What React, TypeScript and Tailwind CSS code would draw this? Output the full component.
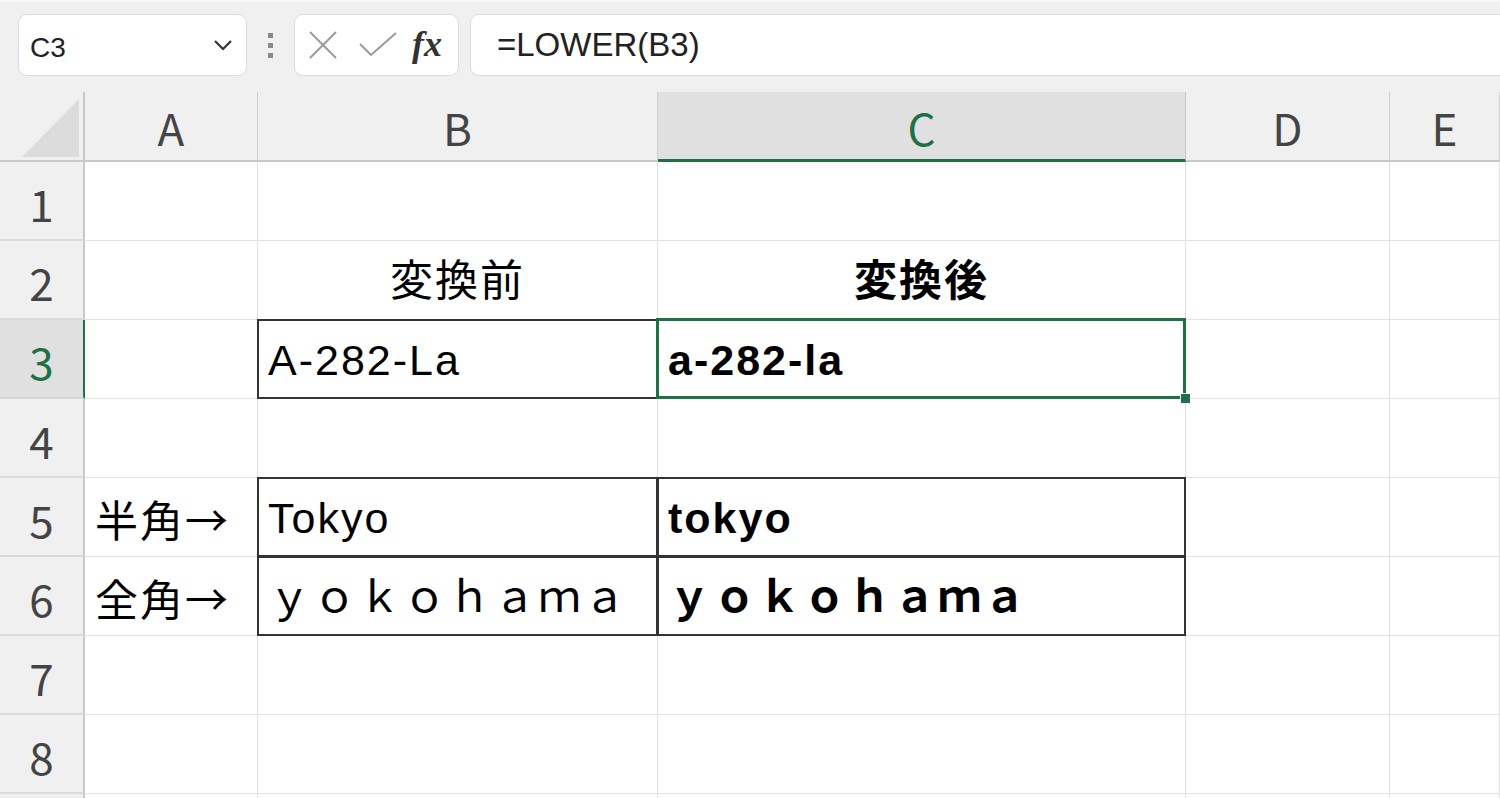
import React from "react";

const cellFont = { fontFamily: '"Liberation Sans", "Noto Sans CJK JP", sans-serif' };

type Cell = {
  text?: string;
  bold?: boolean;
  center?: boolean;
  cjk?: boolean;
  box?: boolean;
  selected?: boolean;
};

const rows: Cell[][] = [
  [{}, {}, {}, {}, {}],
  [{}, { text: "変換前", center: true }, { text: "変換後", center: true, bold: true }, {}, {}],
  [{}, { text: "A-282-La", box: true }, { text: "a-282-la", bold: true, selected: true }, {}, {}],
  [{}, {}, {}, {}, {}],
  [{ text: "半角→", cjk: true }, { text: "Tokyo", box: true }, { text: "tokyo", bold: true, box: true }, {}, {}],
  [{ text: "全角→", cjk: true }, { text: "ｙｏｋｏｈａｍａ", box: true }, { text: "ｙｏｋｏｈａｍａ", bold: true, box: true }, {}, {}],
  [{}, {}, {}, {}, {}],
  [{}, {}, {}, {}, {}],
  [{}, {}, {}, {}, {}],
];

const cols = ["A", "B", "C", "D", "E"];

export default function App() {
  return (
    <div className="w-[1500px] h-[798px] overflow-hidden bg-[#f0f0f0]" style={cellFont}>
      {/* Formula bar */}
      <div className="h-[92px] flex items-start pt-[12px] pl-[18px] border-t-2 border-[#f8f8f8]">
        <div className="w-[229px] h-[62px] bg-white rounded-[9px] border border-[#dcdcdc] flex items-center justify-between pl-[11px] pr-[13px] shrink-0">
          <span className="text-[28px] text-[#222] mt-[6px]" style={{ fontFamily: '"Liberation Sans", sans-serif' }}>C3</span>
          <svg width="20" height="12" viewBox="0 0 20 12">
            <polyline points="2,2 10,10 18,2" fill="none" stroke="#333" strokeWidth="2.2" />
          </svg>
        </div>
        <div className="w-[47px] h-[62px] flex flex-col items-center justify-center gap-[5px] shrink-0">
          <span className="w-[5px] h-[5px] bg-[#8a8a8a]" />
          <span className="w-[5px] h-[5px] bg-[#8a8a8a]" />
          <span className="w-[5px] h-[5px] bg-[#8a8a8a]" />
        </div>
        <div className="w-[165px] h-[62px] bg-white rounded-[9px] border border-[#dcdcdc] flex items-center pl-[13px] shrink-0">
          <svg width="30" height="30" viewBox="0 0 30 30">
            <line x1="2" y1="2" x2="28" y2="28" stroke="#9a9a9a" strokeWidth="2" />
            <line x1="28" y1="2" x2="2" y2="28" stroke="#9a9a9a" strokeWidth="2" />
          </svg>
          <svg width="40" height="30" viewBox="0 0 40 30" className="ml-[20px]">
            <polyline points="2,14 13,25 38,3" fill="none" stroke="#9a9a9a" strokeWidth="2" />
          </svg>
          <span
            className="ml-[14px] text-[36px] italic font-bold text-[#333] leading-none -mt-[2px]"
            style={{ fontFamily: '"Liberation Serif", serif' }}
          >
            fx
          </span>
        </div>
        <div className="ml-[11px] w-[1100px] h-[62px] bg-white rounded-[9px] border border-[#dcdcdc] flex items-center pl-[26px] shrink-0">
          <span className="text-[33px] text-[#222]" style={{ fontFamily: '"Liberation Sans", sans-serif' }}>=LOWER(B3)</span>
        </div>
      </div>

      {/* Sheet */}
      <div className="grid grid-cols-[85px_173px_400px_528px_204px_1fr] grid-rows-[70px_repeat(9,79px)]">
        {/* corner */}
        <div className="bg-[#f0f0f0] border-r-2 border-b-2 border-[#c8c8c8] relative">
          <svg width="85" height="70" viewBox="0 0 85 70" className="absolute left-0 top-0">
            <polygon points="22,65 79,65 79,7" fill="#dcdcdc" />
          </svg>
        </div>
        {cols.map((c) => {
          const sel = c === "C";
          return (
            <div
              key={c}
              className={
                sel
                  ? "bg-[#e0e0e0] border-r border-[#c8c8c8] border-b-[3px] border-b-[#1e7145] flex items-center justify-center text-[#1e7145]"
                  : "bg-[#f0f0f0] border-r border-[#d0d0d0] border-b-2 border-b-[#c8c8c8] flex items-center justify-center text-[#444]"
              }
              style={{ fontFamily: '"Noto Sans CJK JP", sans-serif' }}
            >
              <span className="text-[44px] leading-none mt-[2px]">{c}</span>
            </div>
          );
        })}
        {rows.map((row, ri) => {
          const rn = ri + 1;
          const selRow = rn === 3;
          return (
            <React.Fragment key={rn}>
              <div
                className={
                  selRow
                    ? "bg-[#e0e0e0] border-r-2 border-r-[#1e7145] border-b-2 border-b-[#d6d6d6] flex items-center justify-center text-[#1e7145]"
                    : "bg-[#f0f0f0] border-r-2 border-r-[#c8c8c8] border-b-2 border-b-[#dadada] flex items-center justify-center text-[#444]"
                }
                style={{ fontFamily: '"Noto Sans CJK JP", sans-serif' }}
              >
                {rn <= 8 && <span className="text-[44px] leading-none mt-[4px]">{rn}</span>}
              </div>
              {row.map((cell, ci) => (
                <div
                  key={ci}
                  className={
                    "relative bg-white border-r border-b border-[#e1e1e1] flex items-center px-[10px] tracking-[2px] text-black whitespace-nowrap " +
                    (cell.center ? "justify-center " : "") +
                    (cell.bold ? "font-bold " : "") +
                    (cell.selected ? "z-20 " : cell.box ? "z-10 " : "")
                  }
                >
                  {cell.text && (
                    <span
                      className="text-[43px] leading-none mt-[2px]"
                      style={cell.cjk ? { fontFamily: '"Noto Sans CJK JP", sans-serif' } : undefined}
                    >
                      {cell.text}
                    </span>
                  )}
                  {cell.box && (
                    <div className="absolute -left-px -top-px -right-px -bottom-px border-2 border-[#333] pointer-events-none" />
                  )}
                  {cell.selected && (
                    <>
                      <div className="absolute -left-[2px] -top-[2px] -right-[1px] -bottom-[1px] border-[3px] border-[#1e7145] pointer-events-none" />
                      <div className="absolute -right-[6px] -bottom-[6px] w-[11px] h-[11px] bg-[#1e7145] border border-white" />
                    </>
                  )}
                </div>
              ))}
            </React.Fragment>
          );
        })}
      </div>
    </div>
  );
}
